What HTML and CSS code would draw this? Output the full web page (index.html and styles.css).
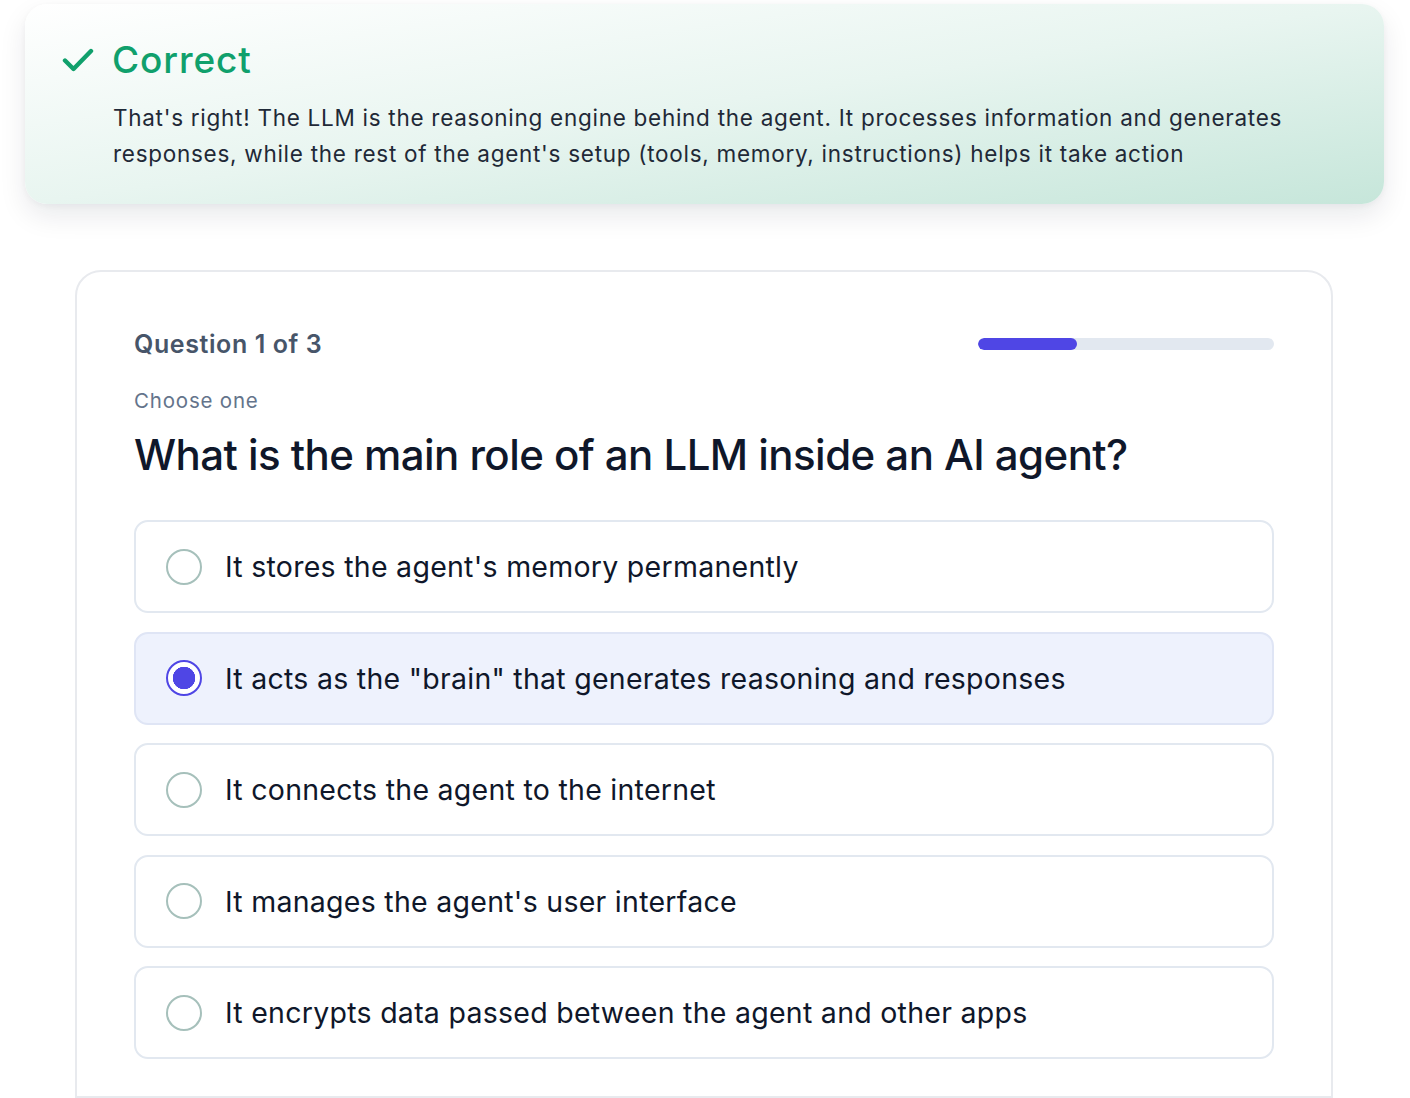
FILE: index.html
```html
<!DOCTYPE html>
<html lang="en">
<head>
<meta charset="utf-8">
<title>Quiz</title>
<link rel="stylesheet" href="styles.css">
</head>
<body>
<div class="page">
  <section class="feedback">
    <div class="feedback-head">
      <svg class="check" viewBox="0 0 32 26" width="32" height="26" aria-hidden="true">
        <path d="M3 13.5 L11.5 22 L29 4" fill="none" stroke="currentColor" stroke-width="4.4" stroke-linecap="round" stroke-linejoin="round"/>
      </svg>
      <h2 class="feedback-title">Correct</h2>
    </div>
    <p class="feedback-text">That's right! The LLM is the reasoning engine behind the agent. It processes information and generates responses, while the rest of the agent's setup (tools, memory, instructions) helps it take action</p>
  </section>

  <section class="quiz">
    <div class="quiz-top">
      <span class="quiz-count">Question 1 of 3</span>
      <div class="progress"><div class="progress-fill" style="width: 33.3%"></div></div>
    </div>
    <p class="quiz-hint">Choose one</p>
    <h1 class="quiz-question">What is the main role of an LLM inside an AI agent?</h1>
    <ul class="options">
      <li class="option"><span class="radio"></span><span class="option-text">It stores the agent's memory permanently</span></li>
      <li class="option selected"><span class="radio"></span><span class="option-text">It acts as the "brain" that generates reasoning and responses</span></li>
      <li class="option"><span class="radio"></span><span class="option-text">It connects the agent to the internet</span></li>
      <li class="option"><span class="radio"></span><span class="option-text">It manages the agent's user interface</span></li>
      <li class="option"><span class="radio"></span><span class="option-text">It encrypts data passed between the agent and other apps</span></li>
    </ul>
  </section>
</div>
</body>
</html>
```
FILE: styles.css
```css
* { box-sizing: border-box; }

html, body {
  margin: 0;
  padding: 0;
  background: #ffffff;
}

body {
  font-family: Inter, "Noto Sans", "Liberation Sans", sans-serif;
  color: #0f172a;
  height: 1098px;
  overflow: hidden;
}

.page {
  padding: 4px 26px 0 25px;
}

/* Answer feedback banner */
.feedback {
  border-radius: 22px;
  padding: 34px 36px 32px 37px;
  background: linear-gradient(to bottom right, #ffffff 0%, #e8f5f0 50%, #c6e6da 100%);
  box-shadow: 0 12px 28px rgba(15, 23, 42, 0.09), 0 2px 6px rgba(15, 23, 42, 0.04);
  height: 200px;
}

.feedback-head {
  display: flex;
  align-items: center;
  gap: 18px;
  height: 44px;
}

.check {
  color: #10a06c;
  margin-top: 0;
  flex: none;
}

.feedback-title {
  margin: 0;
  font-size: 37px;
  font-weight: 500;
  color: #10a06c;
  line-height: 44px;
  letter-spacing: 0.9px;
}

.feedback-text {
  margin: 18px 0 0 51px;
  font-size: 22.5px;
  line-height: 36px;
  color: #1f2937;
  letter-spacing: 0.72px;
}

/* Question card */
.quiz {
  margin: 66px 51px 0 50px;
  border: 2px solid #e8eaee;
  border-radius: 26px 26px 0 0;
  padding: 55px 57px 0 57px;
  height: 828px;
}

.quiz-top {
  display: flex;
  align-items: center;
  justify-content: space-between;
  height: 34px;
}

.quiz-count {
  font-size: 25px;
  font-weight: 600;
  color: #475569;
  letter-spacing: 0.6px;
}

.progress {
  width: 296px;
  height: 12px;
  border-radius: 6px;
  background: #e2e8f0;
  overflow: hidden;
}

.progress-fill {
  height: 100%;
  border-radius: 6px;
  background: #4f46e5;
}

.quiz-hint {
  margin: 26px 0 0 0;
  font-size: 20.5px;
  line-height: 28px;
  color: #64748b;
  letter-spacing: 0.8px;
}

.quiz-question {
  margin: 14px 0 0 0;
  font-size: 42px;
  line-height: 52px;
  font-weight: 500;
  color: #0f172a;
  letter-spacing: -0.55px;
}

.options {
  list-style: none;
  margin: 39px 0 0 0;
  padding: 0;
  display: flex;
  flex-direction: column;
  gap: 18.5px;
}

.option {
  display: flex;
  align-items: center;
  gap: 23px;
  height: 93px;
  padding: 0 30px;
  border: 2px solid #e2e8f0;
  border-radius: 14px;
  background: #ffffff;
}

.option.selected {
  background: #eef2fd;
  border-color: #dfe5f5;
}

.radio {
  flex: none;
  width: 36px;
  height: 36px;
  border-radius: 50%;
  border: 2px solid #a6c0bb;
  background: #ffffff;
}

.option.selected .radio {
  border-color: #4f46e5;
  background: radial-gradient(circle, #4f46e5 0 11px, #ffffff 11.5px);
}

.option-text {
  font-size: 28.5px;
  color: #0f172a;
  letter-spacing: 0.27px;
}
```
